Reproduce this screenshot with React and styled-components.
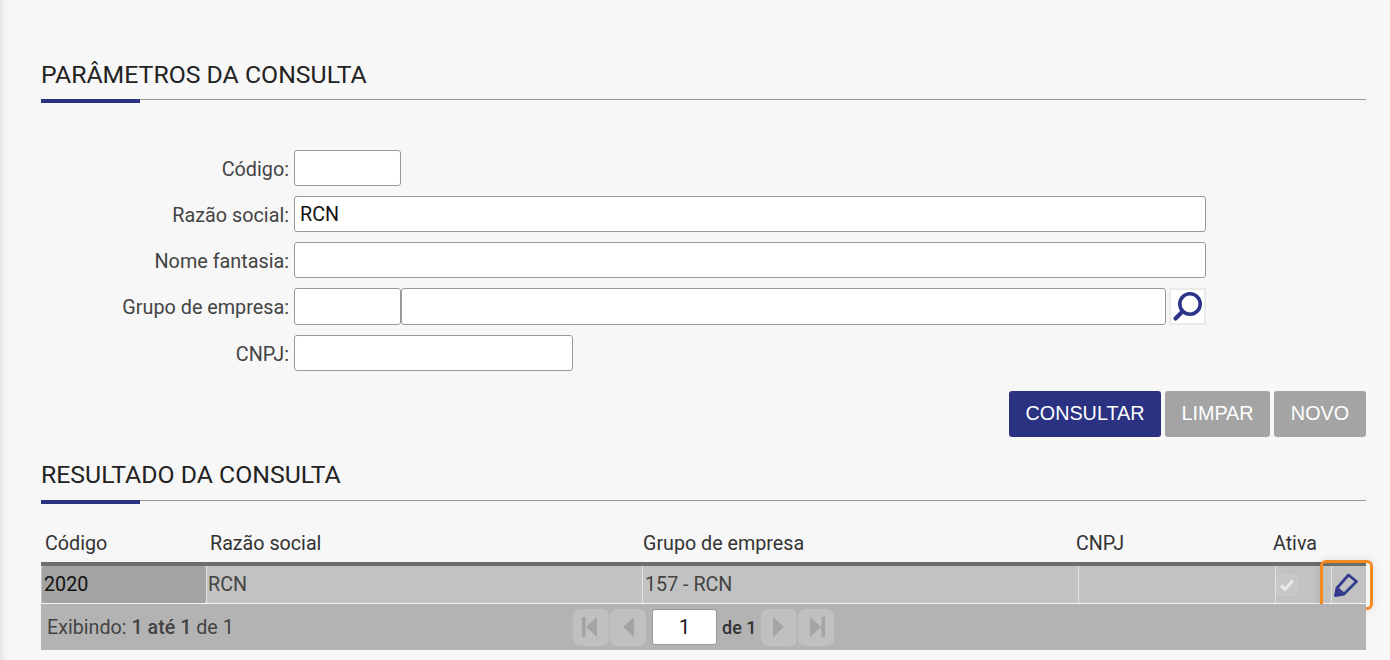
import React from 'react'
import styled, { createGlobalStyle } from 'styled-components'

const GlobalStyle = createGlobalStyle`
  html, body { margin: 0; padding: 0; height: 100%; background: #f7f7f7; overflow: hidden; }
  body { font-family: Roboto, "Liberation Sans", sans-serif; }
`

const Page = styled.div`
  height: 660px;
  box-sizing: border-box;
  padding: 60px 24px 0 41px;
  background: linear-gradient(to right, #e4e4e4 0, #f1f1f1 4px, #f7f7f7 8px);
`

const SectionHead = styled.div`
  height: ${p => p.$h}px;
  margin-top: ${p => p.$top || 0}px;
  box-sizing: border-box;
  border-bottom: 1px solid #999;
  position: relative;
  font-size: 24.8px;
  line-height: 30px;
  color: #222;
  &::after {
    content: '';
    position: absolute;
    left: 0;
    bottom: -4px;
    width: 99px;
    height: 4px;
    background: #2b3282;
  }
`

const Form = styled.div`
  display: flex;
  flex-direction: column;
  gap: 10px;
  margin-top: 50px;
`

const Row = styled.div`
  display: flex;
  align-items: center;
  height: ${p => p.$h || 36}px;
`

const Label = styled.label`
  width: 253px;
  text-align: right;
  padding: 2px 5px 0 0;
  box-sizing: border-box;
  font-size: 19.8px;
  color: #444;
`

const Input = styled.input`
  width: ${p => p.$w}px;
  height: ${p => p.$h || 36}px;
  box-sizing: border-box;
  border: 1px solid #999;
  border-radius: 3px;
  background: #fff;
  padding: 0 5px;
  font: 19.7px Roboto, sans-serif;
  color: #111;
  outline: none;
`

const SearchBtn = styled.button`
  width: 37px;
  height: 37px;
  margin-left: 3px;
  padding: 0;
  border: 2px solid #eaeaea;
  background: #fff;
  display: flex;
  align-items: center;
  justify-content: center;
`

const Actions = styled.div`
  display: flex;
  justify-content: flex-end;
  gap: 4px;
  margin-top: 20px;
`

const Btn = styled.button`
  width: ${p => p.$w}px;
  height: 46px;
  border: 0;
  padding: 0 0 2px;
  border-radius: 3px;
  background: ${p => (p.$primary ? '#2b3282' : '#a4a4a4')};
  color: #fff;
  font: 19.8px "Liberation Sans", Arial, sans-serif;
`

const Columns = '166px 436px 436px 197px 56px 34px'

const HeadRow = styled.div`
  display: grid;
  grid-template-columns: ${Columns};
  height: 37px;
  margin-top: 24px;
  align-items: center;
  font-size: 19.7px;
  color: #333;
  border-bottom: 4px solid #6c6c6c;
  line-height: 34px;
`

const HeadCell = styled.div`
  padding-left: ${p => p.$pad || 0}px;
  margin-left: ${p => p.$shift || 0}px;
  white-space: nowrap;
`

const DataRow = styled.div`
  display: grid;
  grid-template-columns: ${Columns};
  height: 38px;
  box-sizing: border-box;
  background: #c2c2c2;
  border-bottom: 1px solid #f2f2f2;
  position: relative;
  font-size: 19.7px;
  color: #444;
`

const Cell = styled.div`
  display: flex;
  align-items: center;
  padding-left: ${p => (p.$pad === undefined ? 2 : p.$pad)}px;
  border-right: ${p => (p.$noLine ? 'none' : '1px solid #e2e2e2')};
`

const KeyWrap = styled.div`
  border-right: 1px solid #e2e2e2;
  padding-left: 1px;
  display: flex;
`

const KeyCell = styled.div`
  flex: 1;
  display: flex;
  align-items: center;
  padding-left: 2px;
  background: #a3a3a3;
  color: #111;
  border-radius: 3px;
`

const CheckBox = styled.span`
  width: 22px;
  height: 22px;
  box-sizing: border-box;
  border: 1px solid #cbcbcb;
  border-radius: 4px;
  background: #c6c6c6;
  display: flex;
  align-items: center;
  justify-content: center;
`

const FocusRing = styled.span`
  position: absolute;
  left: 1279px;
  top: -6px;
  width: 53px;
  height: 50px;
  box-sizing: border-box;
  border: 3px solid #f58a1f;
  border-radius: 6px;
  box-shadow: 0 0 8px rgba(0, 0, 0, 0.12);
`

const Pager = styled.div`
  display: flex;
  align-items: center;
  position: relative;
  height: 46px;
  background: #b3b3b3;
  padding-left: 6px;
  font-size: 19.7px;
  color: #444;
`

const PagerInfo = styled.span`
  width: 526px;
  b { font-weight: 500; }
`

const PageBtn = styled.span`
  width: 36px;
  height: 37px;
  margin-right: 1px;
  border-radius: 7px;
  background: #c0c0c0;
  display: flex;
  align-items: center;
  justify-content: center;
`

const PageInput = styled(Input)`
  text-align: center;
  margin: 0 5px;
`

const PageOf = styled.span`
  width: 39px;
  color: #333;
  font-weight: 500;
  font-size: 18px;
`

const MagnifierIcon = () => (
  <svg width="31" height="31" viewBox="0 0 31 31">
    <circle cx="18" cy="13" r="10.2" fill="none" stroke="#2d3488" strokeWidth="3.6" />
    <path d="M10.5 20.5 L3.5 27.5" stroke="#2d3488" strokeWidth="4.2" strokeLinecap="round" />
  </svg>
)

const PencilIcon = () => (
  <svg width="26" height="26" viewBox="0 0 26 26">
    <path
      d="M2.5 23.5 L4 16 L15.5 3 L23.5 9.5 L11 22 Z M4 16 L11 22"
      fill="none"
      stroke="#333a8f"
      strokeWidth="2.8"
      strokeLinejoin="round"
    />
    <path d="M2.5 23.5 L3.8 17.5 L9 22 Z" fill="#333a8f" />
  </svg>
)

const CheckIcon = () => (
  <svg width="16" height="16" viewBox="0 0 16 16">
    <path d="M2 8.5 L6 12.5 L14 3.5" fill="none" stroke="#e9e9e9" strokeWidth="3.2" />
  </svg>
)

const Nav = ({ dir, bar }) => (
  <PageBtn>
    <svg width="20" height="26" viewBox="0 0 20 26" fill="#a4a4a4">
      {dir === 'left' ? <path d="M16 3 V23 L5 13 Z" /> : <path d="M4 3 V23 L15 13 Z" />}
      {bar && (dir === 'left' ? <rect x="1" y="3" width="3.5" height="20" /> : <rect x="15.5" y="3" width="3.5" height="20" />)}
    </svg>
  </PageBtn>
)

export default function App() {
  return (
    <Page>
      <GlobalStyle />
      <SectionHead $h={40}>PARÂMETROS DA CONSULTA</SectionHead>
      <Form>
        <Row>
          <Label>Código:</Label>
          <Input $w={107} />
        </Row>
        <Row>
          <Label>Razão social:</Label>
          <Input $w={912} defaultValue="RCN" />
        </Row>
        <Row>
          <Label>Nome fantasia:</Label>
          <Input $w={912} />
        </Row>
        <Row $h={37}>
          <Label>Grupo de empresa:</Label>
          <Input $w={107} $h={37} />
          <Input $w={765} $h={37} />
          <SearchBtn aria-label="Pesquisar"><MagnifierIcon /></SearchBtn>
        </Row>
        <Row>
          <Label>CNPJ:</Label>
          <Input $w={279} />
        </Row>
      </Form>
      <Actions>
        <Btn $primary $w={152}>CONSULTAR</Btn>
        <Btn $w={105}>LIMPAR</Btn>
        <Btn $w={92}>NOVO</Btn>
      </Actions>
      <SectionHead $h={41} $top={23}>RESULTADO DA CONSULTA</SectionHead>
      <HeadRow>
        <HeadCell $pad={4}>Código</HeadCell>
        <HeadCell $pad={3}>Razão social</HeadCell>
        <HeadCell>Grupo de empresa</HeadCell>
        <HeadCell $shift={-3}>CNPJ</HeadCell>
        <HeadCell $shift={-3}>Ativa</HeadCell>
        <HeadCell />
      </HeadRow>
      <DataRow>
        <KeyWrap><KeyCell>2020</KeyCell></KeyWrap>
        <Cell $pad={1}>RCN</Cell>
        <Cell>157 - RCN</Cell>
        <Cell />
        <Cell $pad={0}><CheckBox><CheckIcon /></CheckBox></Cell>
        <Cell $noLine $pad={1}><PencilIcon /></Cell>
        <FocusRing />
      </DataRow>
      <Pager>
        <PagerInfo>Exibindo: <b>1 até 1</b> de 1</PagerInfo>
        <Nav dir="left" bar />
        <Nav dir="left" />
        <PageInput $w={65} defaultValue="1" />
        <PageOf>de 1</PageOf>
        <Nav dir="right" />
        <Nav dir="right" bar />
      </Pager>
    </Page>
  )
}
